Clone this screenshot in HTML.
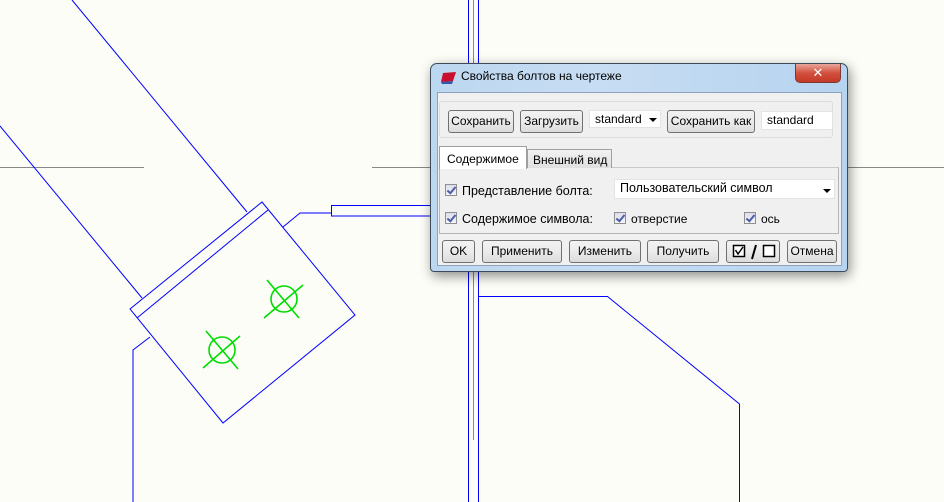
<!DOCTYPE html>
<html><head><meta charset="utf-8"><style>
*{margin:0;padding:0;box-sizing:border-box}
body{width:944px;height:502px;overflow:hidden;background:#fdfdf8;position:relative;font-family:"Liberation Sans","DejaVu Sans",sans-serif;font-size:12px;color:#000}
svg.bg{position:absolute;left:0;top:0}
.dlg{position:absolute;left:430px;top:63px;width:418px;height:209px;border:1px solid #3c4a5a;border-radius:7px 7px 4px 4px;background:linear-gradient(90deg,#bcd7f0,#c7ddf3 40%,#b6d3ef);box-shadow:2px 4px 12px rgba(0,0,0,.45)}
.abs{position:absolute}
.title{left:30px;top:5px;font-size:12px}
.close{left:364px;top:0;width:46px;height:19px;border:1px solid #7a3a34;border-top:none;border-radius:0 0 5px 5px;background:linear-gradient(#e8a79c,#d2503e 50%,#c43a26);color:#fff;font-weight:bold;text-align:center;font-size:13px;line-height:17px}
.client{left:6px;top:28px;width:405px;height:174px;background:#f0f0f0;border:1px solid #8ea3bb}
.btn{position:absolute;height:23px;border:1px solid #707070;border-radius:3px;background:linear-gradient(#f2f2f2,#ebebeb 50%,#dcdcdc);text-align:center;line-height:21px;font-size:12px}
.field{position:absolute;background:#fff;border:1px solid #e3e3e3;padding-left:5px;line-height:16px}
.cb{position:absolute;width:12px;height:12px;border:1px solid #8f8f8f;background:linear-gradient(#dde,#f4f4f8);}
.cb:after{content:"";position:absolute;left:3px;top:0px;width:3px;height:7px;border:solid #4a5fa5;border-width:0 2px 2px 0;transform:rotate(40deg)}
.arr{position:absolute;width:0;height:0;border-left:4px solid transparent;border-right:4px solid transparent;border-top:4px solid #000}
</style></head><body>
<svg class="bg" width="944" height="502">
<g stroke="#888" stroke-width="1" fill="none">
<line x1="0" y1="167.5" x2="144" y2="167.5"/>
<line x1="372" y1="167.5" x2="432" y2="167.5"/>
<line x1="848" y1="167.5" x2="944" y2="167.5"/>
<line x1="473.5" y1="0" x2="473.5" y2="440"/>
</g>
<g stroke="#0000ff" stroke-width="1" fill="none">
<line x1="72" y1="0" x2="247" y2="212"/>
<line x1="0" y1="126" x2="142" y2="298"/>
<polygon points="130,309 262,202 355,315 223,423"/>
<line x1="137" y1="318" x2="268" y2="210"/>
<polyline points="283,227 300,213 331,213"/>
<rect x="331.5" y="205.5" width="100" height="10.5"/>
<polyline points="150,337 133,350 133,502"/>
<line x1="468.5" y1="0" x2="468.5" y2="502"/>
<line x1="478.5" y1="0" x2="478.5" y2="502"/>
<polyline points="478,296.5 607.5,296.5 739.5,404 739.5,502"/>
</g>
<g stroke="#00dd00" stroke-width="1.6" fill="none">
<circle cx="284" cy="299" r="13"/>
<line x1="267" y1="280" x2="299" y2="318"/>
<line x1="264" y1="318" x2="303" y2="285"/>
<circle cx="222" cy="350" r="13"/>
<line x1="206" y1="331" x2="238" y2="369"/>
<line x1="203" y1="368" x2="240" y2="336"/>
</g>
</svg>
<div class="dlg">
<svg class="abs" style="left:9px;top:7px" width="18" height="14"><polygon points="3,2 16,1 13,10 1,11" fill="#c8102e"/><polygon points="1,11 13,10 12,13 2,13" fill="#3355aa"/></svg>
<div class="abs title">Свойства болтов на чертеже</div>
<div class="abs close">✕</div>
<div class="abs client">
 <div class="abs" style="left:1px;top:8px;width:394px;height:37px;border:1px solid #dcdcdc;border-radius:3px"></div>
 <div class="btn" style="left:10px;top:17px;width:66px">Сохранить</div>
 <div class="btn" style="left:82px;top:17px;width:63px">Загрузить</div>
 <div class="field" style="left:151px;top:17px;width:72px;height:18px">standard</div>
 <div class="arr" style="left:211px;top:25px"></div>
 <div class="btn" style="left:229px;top:17px;width:88px">Сохранить как</div>
 <div class="field" style="left:323px;top:18px;width:72px;height:19px;line-height:17px">standard</div>
 <div class="abs" style="left:1px;top:74px;width:400px;height:67px;border:1px solid #b5b5b5;border-top-color:#c8c8c8"></div>
 <div class="abs" style="left:1px;top:53px;width:88px;height:23px;background:#fff;border:1px solid #a0a0a0;border-bottom:none;padding:5px 0 0 7px">Содержимое</div>
 <div class="abs" style="left:89px;top:56px;width:85px;height:19px;background:linear-gradient(#f2f2f2,#e0e0e0);border:1px solid #a0a0a0;border-bottom:none;padding:3px 0 0 5px">Внешний вид</div>
 <div class="cb" style="left:7px;top:91px"></div>
 <div class="abs" style="left:24px;top:91px;font-size:12.5px">Представление болта:</div>
 <div class="field" style="left:176px;top:86px;width:221px;height:20px;font-size:12.5px">Пользовательский символ</div>
 <div class="arr" style="left:385px;top:96px"></div>
 <div class="cb" style="left:7px;top:119px"></div>
 <div class="abs" style="left:24px;top:119px;font-size:12.5px">Содержимое символа:</div>
 <div class="cb" style="left:176px;top:119px"></div>
 <div class="abs" style="left:193px;top:119px">отверстие</div>
 <div class="cb" style="left:306px;top:119px"></div>
 <div class="abs" style="left:323px;top:119px">ось</div>
 <div class="btn" style="left:4px;top:147px;width:33px">OK</div>
 <div class="btn" style="left:44px;top:147px;width:80px">Применить</div>
 <div class="btn" style="left:131px;top:147px;width:72px">Изменить</div>
 <div class="btn" style="left:209px;top:147px;width:72px">Получить</div>
 <div class="btn" style="left:288px;top:147px;width:54px">
  <svg style="position:absolute;left:5px;top:3px" width="44" height="16"><rect x="1.5" y="1.5" width="11" height="11" fill="#fff" stroke="#000" stroke-width="1.5"/><polyline points="3.5,6 6,10 11,3" fill="none" stroke="#000" stroke-width="1.5"/><line x1="20" y1="15" x2="24" y2="1" stroke="#000" stroke-width="2"/><rect x="31.5" y="1.5" width="11" height="11" fill="#fff" stroke="#000" stroke-width="1.5"/></svg>
 </div>
 <div class="btn" style="left:349px;top:147px;width:50px">Отмена</div>
</div>
</div>
</body></html>
